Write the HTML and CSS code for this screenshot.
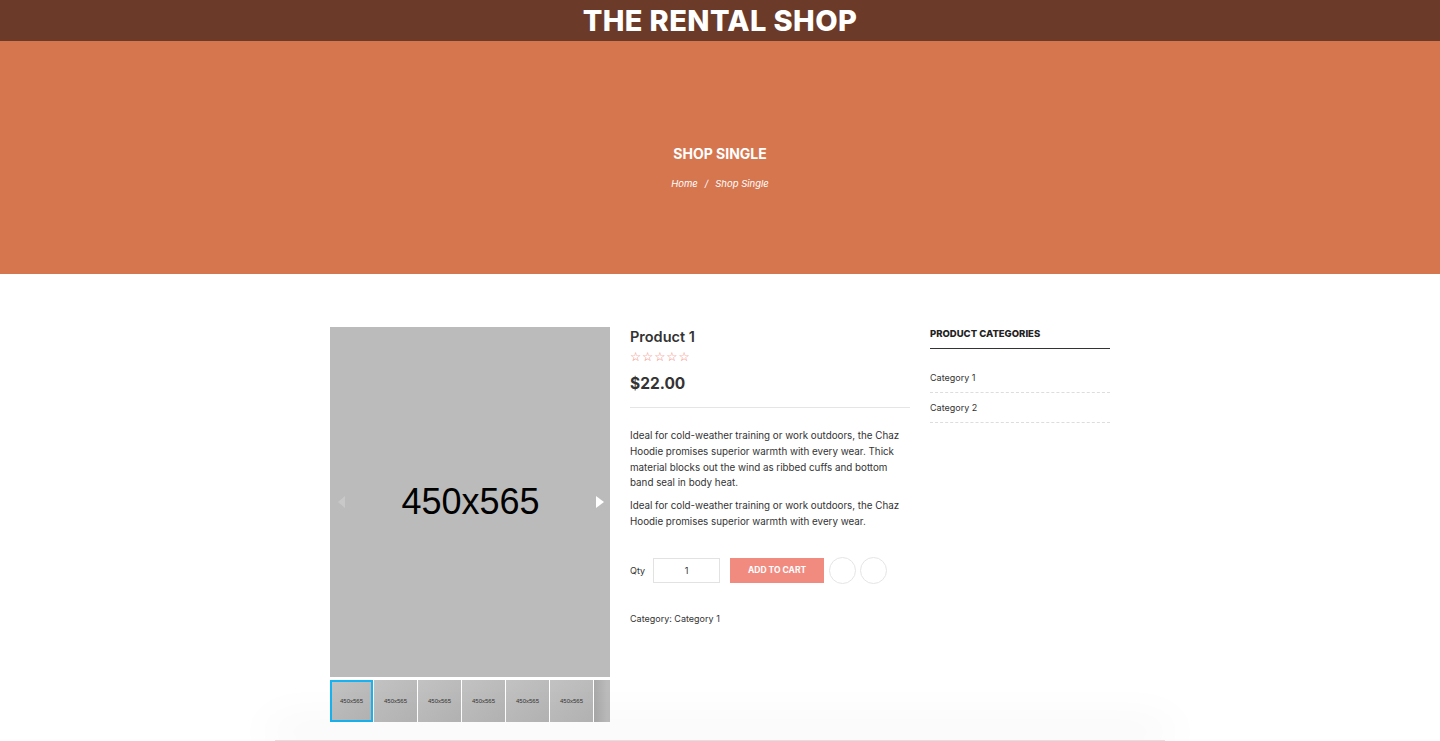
FILE: index.html
```html
<!DOCTYPE html>
<html lang="en">
<head>
<meta charset="utf-8">
<title>Shop Single - The Rental Shop</title>
<link rel="stylesheet" href="styles.css">
</head>
<body>
<header class="topbar">
  <h1 class="brand">THE RENTAL SHOP</h1>
</header>
<section class="hero">
  <h2 class="hero-title">SHOP SINGLE</h2>
  <nav class="crumbs"><a href="#">Home</a><span class="sep">/</span><span>Shop Single</span></nav>
</section>
<main class="content">
  <div class="gallery">
    <div class="main-img">
      <span class="arrow arrow-left"></span>
      <span class="ph">450x565</span>
      <span class="arrow arrow-right"></span>
    </div>
    <div class="thumbs">
      <div class="thumb active"><span>450x565</span></div>
      <div class="thumb"><span>450x565</span></div>
      <div class="thumb"><span>450x565</span></div>
      <div class="thumb"><span>450x565</span></div>
      <div class="thumb"><span>450x565</span></div>
      <div class="thumb"><span>450x565</span></div>
      <div class="thumb thumb-cut"></div>
    </div>
  </div>
  <div class="details">
    <h3 class="p-title">Product 1</h3>
    <div class="stars">☆☆☆☆☆</div>
    <div class="price">$22.00</div>
    <hr class="rule">
    <p class="desc">Ideal for cold-weather training or work outdoors, the Chaz Hoodie promises superior warmth with every wear. Thick material blocks out the wind as ribbed cuffs and bottom band seal in body heat.</p>
    <p class="desc">Ideal for cold-weather training or work outdoors, the Chaz Hoodie promises superior warmth with every wear.</p>
    <div class="buy">
      <label class="qty-label">Qty</label>
      <input class="qty" type="text" value="1">
      <button class="cart">ADD TO CART</button>
      <span class="circle"></span>
      <span class="circle"></span>
    </div>
    <div class="cat">Category: <a href="#">Category 1</a></div>
  </div>
  <aside class="sidebar">
    <h4 class="side-title">PRODUCT CATEGORIES</h4>
    <ul class="cats">
      <li>Category 1</li>
      <li>Category 2</li>
    </ul>
  </aside>
</main>
<div class="overlay-bar"></div>
</body>
</html>
```
FILE: styles.css
```css
* { box-sizing: border-box; }
html, body { margin: 0; padding: 0; }
body {
  font-family: Inter, "Noto Sans", sans-serif;
  color: #333;
  background: #fff;
  width: 1440px;
  height: 741px;
  overflow: hidden;
  position: relative;
}
.topbar {
  background: #6b3a28;
  height: 41px;
  display: flex;
  align-items: center;
  justify-content: center;
}
.brand {
  margin: 0;
  color: #fff;
  font-size: 29px;
  font-weight: 800;
  letter-spacing: 0.4px;
  line-height: 41px;
}
.hero {
  background: #d6764f;
  height: 233px;
  display: flex;
  flex-direction: column;
  align-items: center;
  padding-top: 104px;
}
.hero-title {
  margin: 0;
  color: #fff;
  font-size: 14px;
  font-weight: 700;
  line-height: 18px;
}
.crumbs {
  margin-top: 15px;
  color: #fff;
  font-size: 9.5px;
  font-style: italic;
  display: flex;
  gap: 7px;
}
.crumbs a { color: #fff; text-decoration: none; }
.content {
  display: flex;
  justify-content: center;
  padding-top: 53px;
  gap: 20px;
}
.gallery { width: 280px; }
.main-img {
  height: 350px;
  background: #bbbbbb;
  display: flex;
  align-items: center;
  justify-content: space-between;
  padding: 0 6px 0 8px;
}
.ph {
  font-family: "Liberation Sans", Arial, sans-serif;
  font-size: 36px;
  color: #000;
}
.arrow { width: 0; height: 0; border-top: 6px solid transparent; border-bottom: 6px solid transparent; }
.arrow-left { border-right: 7px solid #c8c8c8; }
.arrow-right { border-left: 8px solid #fff; }
.thumbs {
  display: flex;
  gap: 1px;
  margin-top: 3px;
  overflow: hidden;
  width: 280px;
}
.thumb {
  flex: 0 0 43px;
  height: 42px;
  background: linear-gradient(135deg, #c2c2c2, #b4b4b4);
  display: flex;
  align-items: center;
  justify-content: center;
  font-family: "Liberation Sans", Arial, sans-serif;
  font-size: 6px;
  color: #333;
}
.thumb.active { border: 2px solid #17b3f0; }
.thumb-cut { background: linear-gradient(90deg, #a8a8a8, #bbb 30%, #bbb); }
.details {
  width: 280px;
  padding-top: 1px;
}
.p-title {
  margin: 0;
  font-size: 14.5px;
  font-weight: 600;
  color: #333;
  line-height: 18px;
}
.stars {
  margin-top: 3px;
  color: #f0806f;
  font-family: "DejaVu Sans", sans-serif;
  font-size: 12.5px;
  letter-spacing: 0.9px;
  line-height: 15px;
}
.price {
  margin-top: 10px;
  font-size: 15.5px;
  font-weight: 700;
  color: #333;
  line-height: 20px;
}
.rule {
  margin: 13px 0 0;
  border: 0;
  border-top: 1px solid #e5e5e5;
}
.desc {
  margin: 20px 0 0;
  font-size: 9.8px;
  line-height: 15.8px;
  color: #333;
}
.desc + .desc { margin-top: 7px; }
.buy {
  display: flex;
  align-items: center;
  margin-top: 27px;
}
.qty-label { font-size: 9px; color: #333; margin-right: 8px; }
.qty {
  width: 67px;
  height: 25px;
  border: 1px solid #e2e2e2;
  text-align: center;
  font-family: inherit;
  font-size: 9px;
  color: #333;
  padding: 0;
}
.cart {
  margin-left: 10px;
  width: 94px;
  height: 25px;
  border: 0;
  background: #f28b7f;
  color: #fff;
  font-family: inherit;
  font-weight: 700;
  font-size: 8.5px;
  padding: 0;
}
.circle {
  width: 27px;
  height: 27px;
  border-radius: 50%;
  border: 1px solid #e5e5e5;
  margin-left: 5px;
}
.circle + .circle { margin-left: 4px; }
.cat {
  margin-top: 29px;
  font-size: 9px;
  color: #333;
}
.cat a { color: #333; text-decoration: none; }
.sidebar { width: 180px; }
.side-title {
  margin: 0;
  font-size: 9.5px;
  font-weight: 800;
  color: #222;
  line-height: 13px;
  padding: 0 0 8px;
  border-bottom: 1px solid #333;
}
.cats {
  list-style: none;
  margin: 22px 0 0;
  padding: 0;
}
.cats li {
  font-size: 9px;
  color: #333;
  line-height: 14px;
  padding: 0 0 7px;
  border-bottom: 1px dashed #ddd;
}
.cats li + li { padding-top: 8px; }
.overlay-bar {
  position: absolute;
  left: 275px;
  bottom: 0;
  width: 890px;
  height: 1px;
  background: #e0e0e0;
  box-shadow: 0 -8px 45px 6px rgba(0,0,0,0.08);
}
```
